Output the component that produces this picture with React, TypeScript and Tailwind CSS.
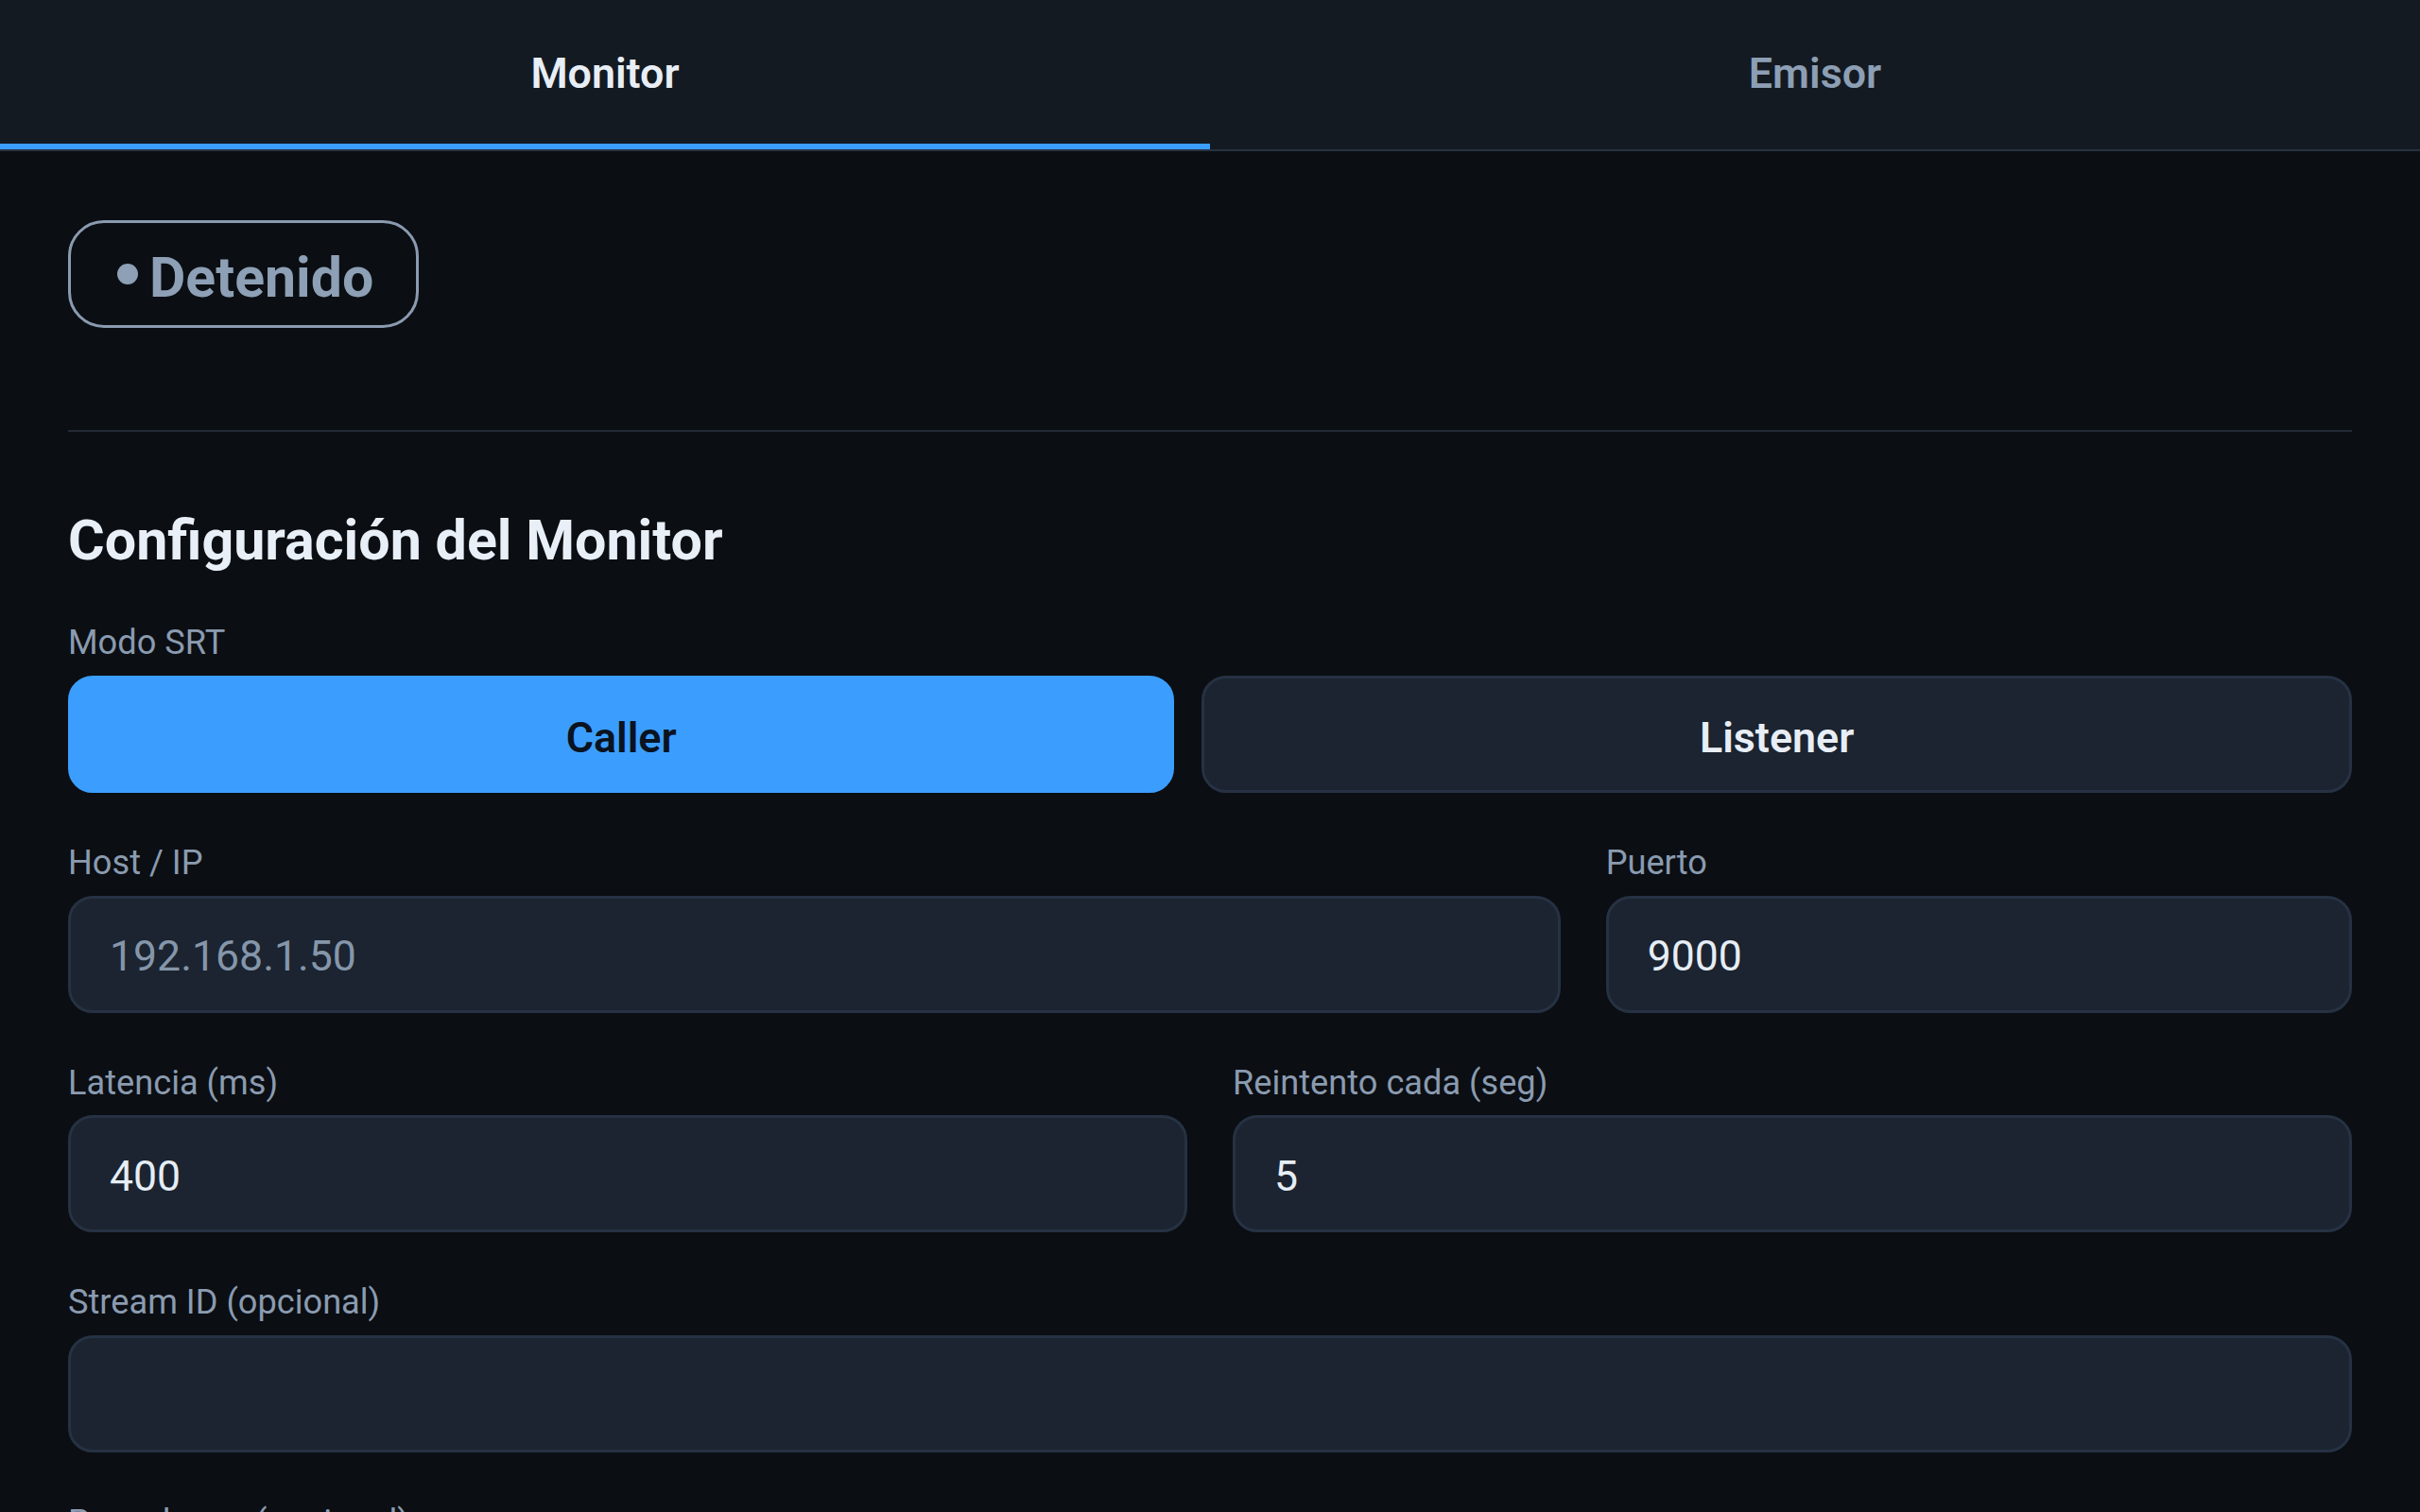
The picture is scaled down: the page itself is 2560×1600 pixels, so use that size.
import React from "react";

function Label({ children }: { children: React.ReactNode }) {
  return (
    <label className="block pt-[2px] text-[36.2px] leading-[52.8px] text-[#8a9bb0]">{children}</label>
  );
}

function Field({
  label,
  value,
  placeholder,
}: {
  label: string;
  value?: string;
  placeholder?: string;
}) {
  return (
    <div className="flex flex-col gap-[8px] min-w-0">
      <Label>{label}</Label>
      <input
        type="text"
        defaultValue={value}
        placeholder={placeholder}
        className="box-border h-[124px] w-full rounded-[26px] border-[3px] border-[#263243] bg-[#1b2430] px-[41px] pt-[5px] text-[44.6px] text-[#e6edf5] outline-none placeholder:text-[#8596aa]"
      />
    </div>
  );
}

export default function App() {
  return (
    <div className="min-h-screen bg-[#0b0e13] font-[family-name:Roboto,sans-serif]">
      {/* Tabs */}
      <div className="flex h-[160px] border-b-[2px] border-[#283242] bg-[#141a22]">
        <button className="flex flex-1 items-center justify-center border-b-[6px] border-[#3b9eff] pt-[3px] text-[44.8px] font-semibold text-[#e8eef6]">
          Monitor
        </button>
        <button className="flex flex-1 items-center justify-center border-b-[6px] border-transparent pt-[3px] text-[44.8px] font-semibold text-[#8c9fb4]">
          Emisor
        </button>
      </div>

      <main className="px-[72px] pt-[73px]">
        {/* Status badge */}
        <div className="inline-flex box-border h-[114px] items-center gap-[12px] rounded-[38px] border-[3px] border-[#8a9bb0] pl-[49px] pr-[45px]">
          <span className="h-[22px] w-[22px] rounded-full bg-[#8da0b5]" />
          <span className="pt-[6px] text-[59px] font-bold leading-none text-[#8da0b5]">Detenido</span>
        </div>

        <div className="mt-[108px] h-[2px] bg-[#232b37]" />

        <section className="mt-[80px] flex flex-col gap-[46px]">
          <h2 className="h-[69px] text-[59.2px] font-bold leading-[69px] text-[#e9eff7]">
            Configuración del Monitor
          </h2>

          <div className="flex flex-col gap-[8px]">
            <Label>Modo SRT</Label>
            <div className="flex gap-[29px]">
              <button className="box-border h-[124px] flex-auto rounded-[26px] border-[3px] border-[#3b9eff] bg-[#3b9eff] pt-[7px] text-[44.8px] font-semibold text-[#0a1320]">
                Caller
              </button>
              <button className="box-border h-[124px] flex-auto rounded-[26px] border-[3px] border-[#263243] bg-[#1b2430] pt-[7px] text-[44.8px] font-semibold text-[#e8eef6]">
                Listener
              </button>
            </div>
          </div>

          <div className="grid grid-cols-[2fr_1fr] gap-x-[48px]">
            <Field label="Host / IP" placeholder="192.168.1.50" />
            <Field label="Puerto" value="9000" />
          </div>

          <div className="grid grid-cols-2 gap-x-[48px]">
            <Field label="Latencia (ms)" value="400" />
            <Field label="Reintento cada (seg)" value="5" />
          </div>

          <Field label="Stream ID (opcional)" value="" />

          <Field label="Passphrase (opcional)" value="" />
        </section>
      </main>
    </div>
  );
}
